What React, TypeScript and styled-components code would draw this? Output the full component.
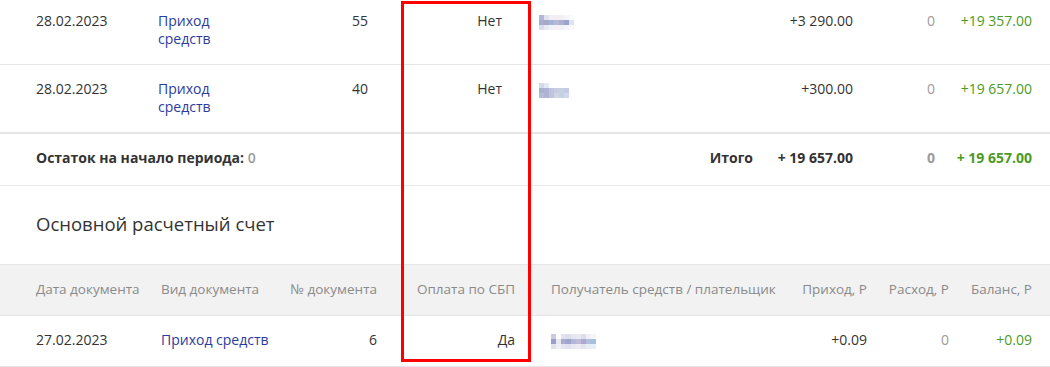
import styled, { createGlobalStyle } from 'styled-components'

const GlobalStyle = createGlobalStyle`
  html, body {
    margin: 0;
    padding: 0;
    background: #ffffff;
  }
  body {
    font-family: 'Open Sans', 'Liberation Sans', sans-serif;
    color: #333333;
    -webkit-font-smoothing: antialiased;
  }
`

// column tracks: left-aligned columns start at their text, right-aligned end at it
const TOP_COLS = '122px 95px 115px 134px 251px 100px 82px 97px'
const MAIN_COLS = '125px 116px 100px 138px 252px 100px 82px 83px'

type Shade = string[][]

const blurTop: Shade = [
  ['#b0b8d8', '#e0e4f0', '#eef0f6', '#f4eef2', '#f2f0f4', '#f4f6fa', '#fafbfd'],
  ['#a8acd0', '#a8a8c8', '#a0b8d8', '#b8b8d8', '#b0b0d0', '#9ca4cc', '#dce4f4'],
  ['#d8dcec', '#e8eaf4', '#f0f2f8', '#f4f2f8', '#f0f2f8', '#f4f6fa', '#fafafc'],
]

const blurSecond: Shade = [
  ['#d4d8e8', '#e4e8f4', '#ffffff', '#ffffff', '#ffffff', '#ffffff'],
  ['#a8b0d0', '#b0b4d4', '#c0c4dc', '#c8cce0', '#c8d0e4', '#c4cce4'],
  ['#b4bcd8', '#b0b4d4', '#c0c4dc', '#d0d4e4', '#c8d0e4', '#d0d8ec'],
]

const blurMain: Shade = [
  ['#c8cce0', '#ffffff', '#e0e2ee', '#dcdeec', '#e4e6f0', '#e8eaf2', '#dcdcec', '#f0f0f6', '#f4f6fa'],
  ['#9aa0c8', '#e8e8f0', '#a8acd0', '#a0a4cc', '#b4b8d8', '#c0bcd8', '#b0a8d0', '#b0c0e0', '#a8c0e0'],
  ['#e0e2ee', '#f0f0f6', '#e4e4f0', '#e0e0ee', '#e8e8f2', '#ececf4', '#e4e4f0', '#e8eef6', '#e8eef8'],
]

function Blurred({ shades }: { shades: Shade }) {
  const cell = 5
  const w = shades[0].length * cell
  const h = shades.length * cell
  return (
    <BlurSvg width={w} height={h} viewBox={`0 0 ${w} ${h}`}>
      {shades.map((row, y) =>
        row.map((c, x) => (
          <rect key={`${x}-${y}`} x={x * cell} y={y * cell} width={cell} height={cell} fill={c} />
        ))
      )}
    </BlurSvg>
  )
}

type Entry = {
  date: string
  num: string
  sbp: string
  payer: Shade
  income: string
  expense: string
  balance: string
}

const topEntries: Entry[] = [
  { date: '28.02.2023', num: '55', sbp: 'Нет', payer: blurTop, income: '+3 290.00', expense: '0', balance: '+19 357.00' },
  { date: '28.02.2023', num: '40', sbp: 'Нет', payer: blurSecond, income: '+300.00', expense: '0', balance: '+19 657.00' },
]

const mainEntries: Entry[] = [
  { date: '27.02.2023', num: '6', sbp: 'Да', payer: blurMain, income: '+0.09', expense: '0', balance: '+0.09' },
]

const headers = [
  'Дата документа',
  'Вид документа',
  '№ документа',
  'Оплата по СБП',
  'Получатель средств / плательщик',
  'Приход, Р',
  'Расход, Р',
  'Баланс, Р',
]

export default function App() {
  return (
    <Page>
      <GlobalStyle />

      <Section $shift={-3}>
        {topEntries.map((e, i) => (
          <DataRow key={i} $cols={TOP_COLS} $last={i === topEntries.length - 1}>
            <Cell>{e.date}</Cell>
            <Cell>
              <DocLink href="#">Приход средств</DocLink>
            </Cell>
            <Cell $align="right">{e.num}</Cell>
            <Cell $align="right">{e.sbp}</Cell>
            <Cell $indent={37}>
              <Blurred shades={e.payer} />
            </Cell>
            <Cell $align="right">{e.income}</Cell>
            <Cell $align="right" $tone="muted">{e.expense}</Cell>
            <Cell $align="right" $tone="positive">{e.balance}</Cell>
          </DataRow>
        ))}

        <TotalRow $cols={TOP_COLS}>
          <Remainder>
            Остаток на начало периода: <Muted>0</Muted>
          </Remainder>
          <Cell $align="right">Итого</Cell>
          <Cell $align="right">+ 19 657.00</Cell>
          <Cell $align="right" $tone="muted">0</Cell>
          <Cell $align="right" $tone="positive">+ 19 657.00</Cell>
        </TotalRow>
      </Section>

      <AccountTitle>Основной расчетный счет</AccountTitle>

      <Section>
        <HeadRow $cols={MAIN_COLS}>
          {headers.map((h, i) => (
            <Cell key={h} $align={[2, 3, 5, 6, 7].includes(i) ? 'right' : 'left'} $indent={i === 4 ? 36 : 0}>
              {h}
            </Cell>
          ))}
        </HeadRow>
        {mainEntries.map((e, i) => (
          <DataRow key={i} $cols={MAIN_COLS} $compact>
            <Cell>{e.date}</Cell>
            <Cell>
              <DocLink href="#">Приход средств</DocLink>
            </Cell>
            <Cell $align="right">{e.num}</Cell>
            <Cell $align="right">{e.sbp}</Cell>
            <Cell $indent={36}>
              <Blurred shades={e.payer} />
            </Cell>
            <Cell $align="right">{e.income}</Cell>
            <Cell $align="right" $tone="muted">{e.expense}</Cell>
            <Cell $align="right" $tone="positive">{e.balance}</Cell>
          </DataRow>
        ))}
      </Section>

      <Highlight />
    </Page>
  )
}

const Page = styled.div`
  position: relative;
  width: 1050px;
  height: 367px;
  overflow: hidden;
  background: #ffffff;
`

const Section = styled.div<{ $shift?: number }>`
  display: flex;
  flex-direction: column;
  margin-top: ${({ $shift }) => $shift ?? 0}px;
`

const Row = styled.div<{ $cols: string }>`
  display: grid;
  grid-template-columns: ${({ $cols }) => $cols};
  padding: 0 18px 0 36px;
  font-size: 14px;
  line-height: 18px;
`

const DataRow = styled(Row)<{ $last?: boolean; $compact?: boolean }>`
  align-items: start;
  padding-top: 15px;
  padding-bottom: ${({ $compact }) => ($compact ? 17 : 16)}px;
  border-bottom: ${({ $last }) => ($last ? 2 : 1)}px solid #e6e6e6;
`

const TotalRow = styled(Row)`
  padding-top: 15px;
  padding-bottom: 18px;
  font-weight: 700;
  border-bottom: 1px solid #ececec;
`

const HeadRow = styled(Row)`
  padding-top: 15px;
  padding-bottom: 17px;
  background: #f2f2f2;
  color: #8a8a8a;
  font-size: 13.5px;
  border-top: 1px solid #e6e6e6;
  border-bottom: 1px solid #e6e6e6;
  white-space: nowrap;
`

const Cell = styled.div<{ $align?: 'left' | 'right'; $indent?: number; $tone?: 'muted' | 'positive' }>`
  text-align: ${({ $align }) => $align ?? 'left'};
  padding-left: ${({ $indent }) => $indent ?? 0}px;
  color: ${({ $tone }) => ($tone === 'muted' ? '#9b9b9b' : $tone === 'positive' ? '#4c9a24' : 'inherit')};
  min-width: 0;
`

const Remainder = styled.div`
  grid-column: 1 / 5;
  white-space: nowrap;
`

const Muted = styled.span`
  color: #9b9b9b;
  font-weight: 600;
`

const DocLink = styled.a`
  color: #2c3c9c;
  text-decoration: none;
`

const AccountTitle = styled.h2`
  margin: 0;
  padding: 26px 36px 28px;
  font-size: 18.5px;
  line-height: 24px;
  font-weight: 500;
  color: #333333;
`

const BlurSvg = styled.svg`
  display: block;
  margin-top: 3px;
`

const Highlight = styled.div`
  position: absolute;
  left: 401px;
  top: 1px;
  width: 130px;
  height: 361px;
  box-sizing: border-box;
  border: 3px solid #ff0000;
  pointer-events: none;
`
